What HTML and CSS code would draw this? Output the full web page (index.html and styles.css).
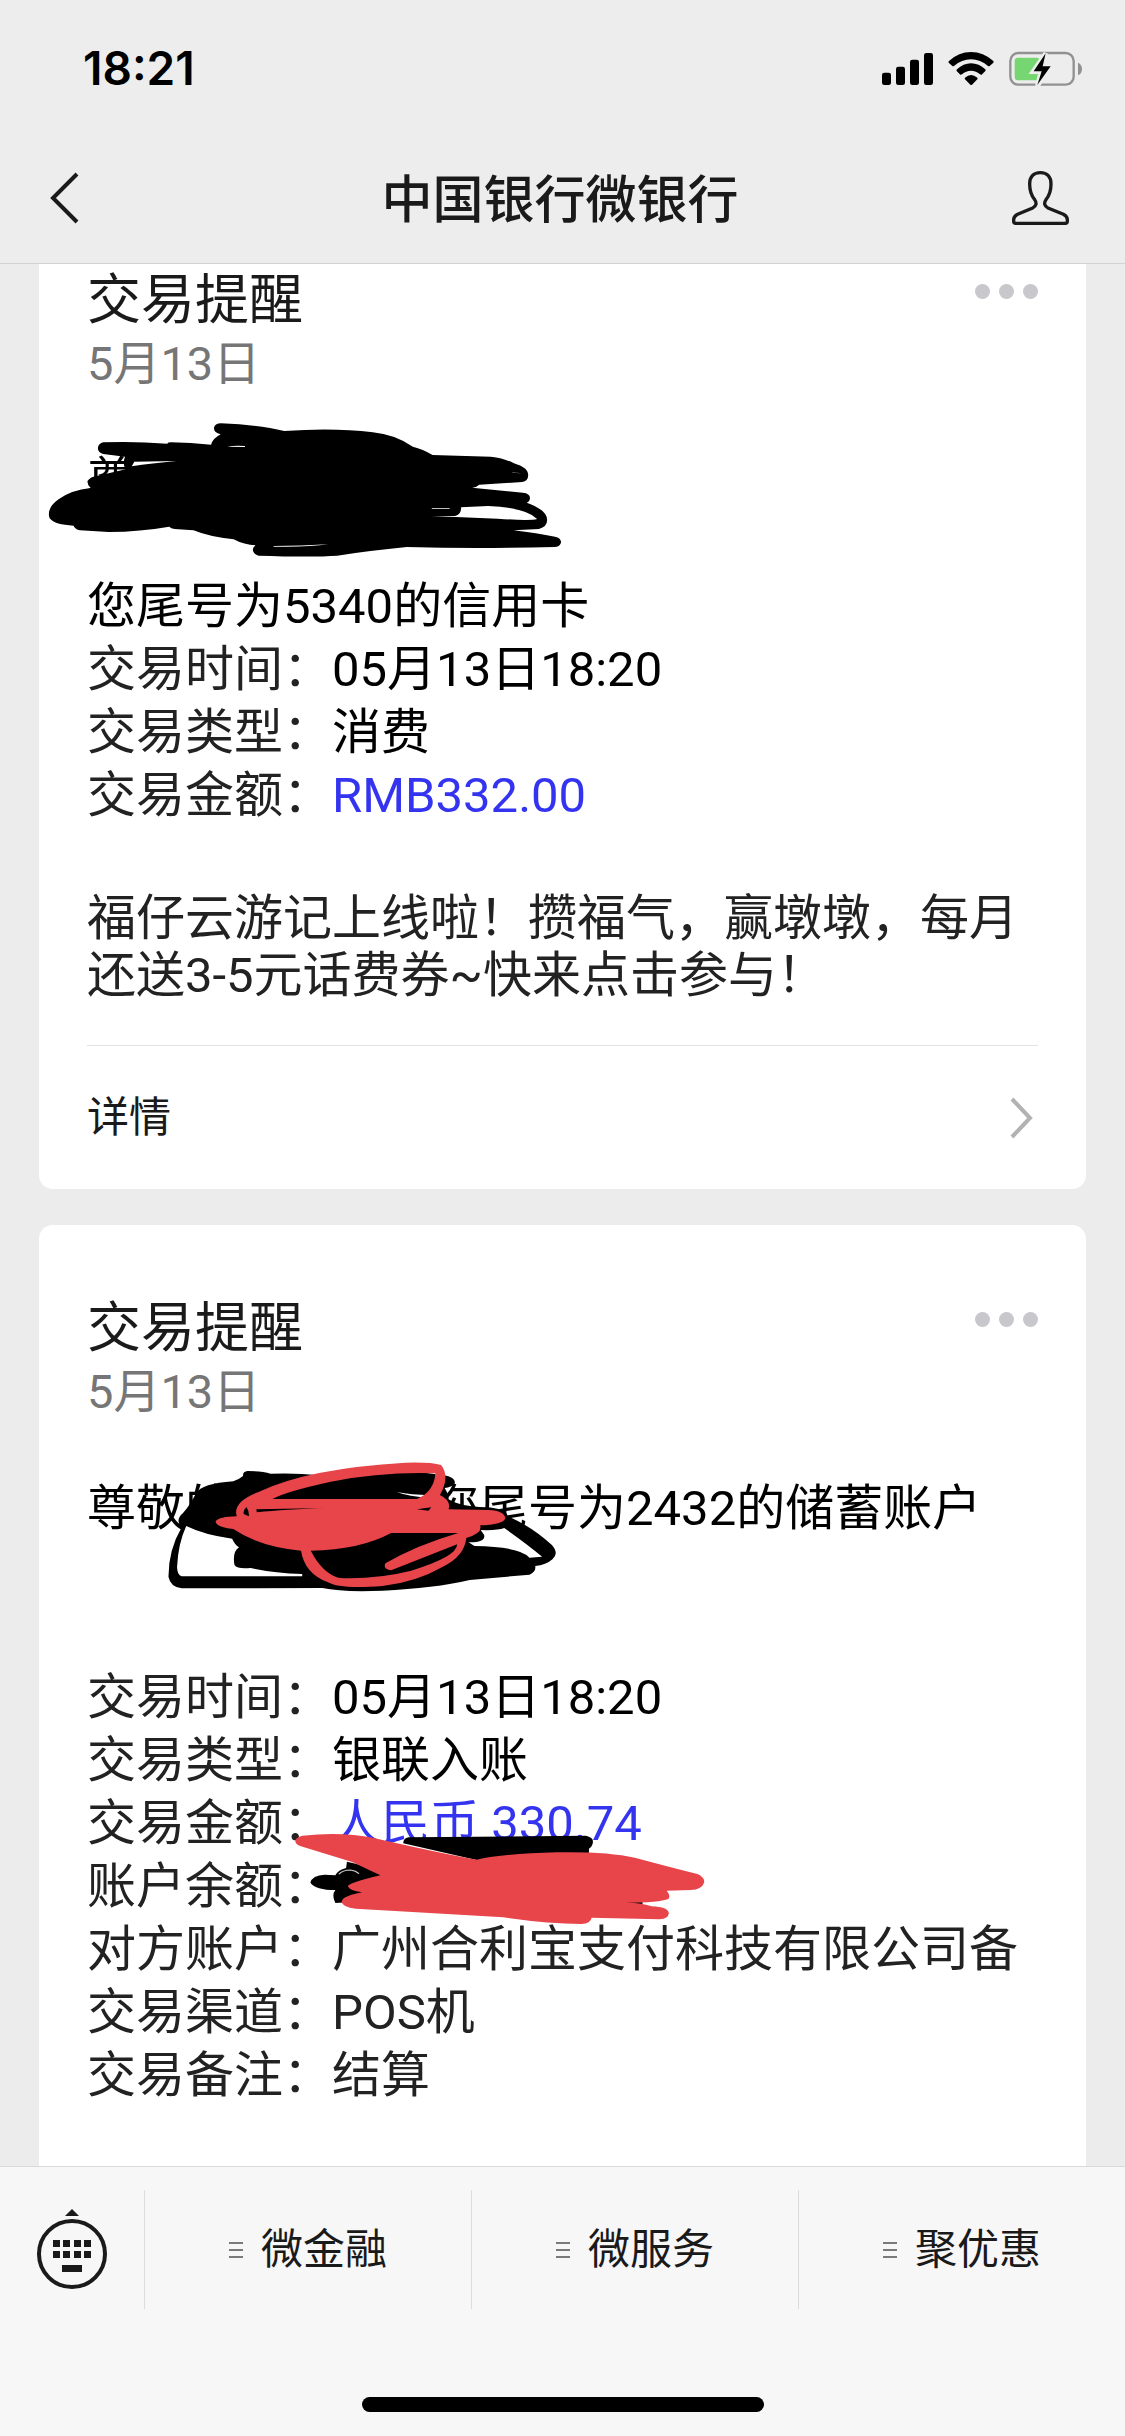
FILE: index.html
```html
<!DOCTYPE html>
<html lang="zh-CN">
<head>
<meta charset="utf-8">
<meta name="viewport" content="width=device-width, initial-scale=1">
<title>中国银行微银行</title>
<link rel="stylesheet" href="styles.css">
</head>
<body>
<header class="header">
  <div class="status">
    <span class="status__time">18:21</span>
    <svg class="status__icons" viewBox="63 63 606 108" aria-hidden="true">
      <rect x="66" y="128" width="27" height="37" rx="7"/>
      <rect x="108" y="110" width="27" height="55" rx="7"/>
      <rect x="150" y="89" width="27" height="76" rx="7"/>
      <rect x="192" y="69" width="27" height="96" rx="7"/>
      <path d="M267 93Q296 66 333 66Q370 66 400 93Q402 96 400 98L389 108Q387 110 384 108Q361 88 333 88Q305 88 282 108Q279 110 277 108L266 98Q264 96 267 93Z"/>
      <path d="M291 118Q310 100 333 100Q357 100 376 118Q378 121 376 123L365 134Q363 135 360 133Q348 122 333 122Q318 122 306 133Q303 135 301 134L290 123Q288 121 291 118Z"/>
      <path d="M315 143Q333 127 352 143Q354 146 352 148L336 164Q333 166 331 164L315 148Q313 146 315 143Z"/>
      <rect x="451" y="69" width="190" height="95" rx="24" fill="none" stroke="#919191" stroke-width="7"/>
      <rect x="464" y="83" width="76" height="68" rx="10" fill="#76d672"/>
      <path d="M654 98Q666 103 666 117Q666 131 654 136Z" fill="#919191"/>
      <path d="M557 70L519 125H543L532 168L573 108H549Z" stroke="#ededed" stroke-width="14"/>
      <path d="M557 70L521 124H545L532 165L572 109H548Z"/>
    </svg>
  </div>
  <nav class="nav">
    <button class="nav__button" type="button" aria-label="返回">
      <svg width="30" height="52" viewBox="0 0 30 52"><path d="M27 2L3 26L27 50" fill="none" stroke="#1a1a1a" stroke-width="4"/></svg>
    </button>
    <h1 class="nav__title">中国银行微银行</h1>
    <button class="nav__button nav__button--end" type="button" aria-label="公众号资料">
      <svg width="59" height="56" viewBox="455 420 177 168"><path d="M543 428C522 428 511 441 511 462C511 487 517 498 526 509C533 519 531 529 520 534L475 553Q463 559 463 569V574Q463 580 469 580H618Q624 580 624 574V569Q624 559 612 553L566 534C555 529 553 519 560 509C569 498 575 487 575 462C575 441 564 428 543 428Z" fill="none" stroke="#1a1a1a" stroke-width="10"/></svg>
    </button>
  </nav>
</header>

<main class="chat">
  <article class="card card--cut">
    <div class="card__head">
      <div>
        <h2 class="card__title">交易提醒</h2>
        <time class="card__date" datetime="05-13">5月13日</time>
      </div>
      <button class="more" type="button" aria-label="更多"><i></i><i></i><i></i></button>
    </div>
    <div class="card__body">
      <p class="strong redacted">尊敬的
        <svg class="scribble scribble--greeting" viewBox="0 0 1568 540" preserveAspectRatio="none" aria-hidden="true">
          <path d="M205 127Q290 123 384 131Q386 127 395 127Q450 128 507 134Q512 115 534 103Q515 98 515 85Q517 70 535 70Q640 74 712 93Q850 82 960 97Q1020 103 1072 140Q1100 147 1127 165L1290 170Q1330 175 1355 190Q1395 203 1395 225Q1395 243 1378 246L1258 254Q1250 262 1238 263L1380 278Q1400 280 1400 294Q1399 305 1391 308Q1448 330 1448 360Q1448 380 1425 387L1354 391Q1420 400 1470 410Q1487 414 1487 427Q1485 441 1468 441Q1250 447 1055 441Q950 452 860 467Q790 472 640 467Q624 462 624 448Q625 440 632 436Q600 435 570 418Q500 410 458 391L405 387Q394 386 390 380Q310 395 220 396L140 391Q125 387 122 377Q70 375 55 355Q45 325 80 298Q115 270 170 264Q160 255 161 243Q168 230 190 227L268 208Q258 193 266 170L205 162Q190 157 190 144Q192 130 205 127Z"/>
          <path fill="#fff" d="M1207 322L1283 318Q1390 323 1420 357Q1400 363 1310 356L1125 348H1190Q1208 345 1207 322ZM292 185L410 183Q340 190 285 199ZM1125 324H1175V326H1125ZM552 140Q570 136 602 138V141ZM682 438Q760 438 835 433Q780 442 682 440ZM1342 218Q1360 214 1376 222Q1360 217 1342 218Z"/>
        </svg>
      </p>
      <p class="strong line-gap">您尾号为5340的信用卡</p>
      <dl class="facts">
        <div><dt>交易时间：</dt><dd class="strong">05月13日18:20</dd></div>
        <div><dt>交易类型：</dt><dd class="strong">消费</dd></div>
        <div><dt>交易金额：</dt><dd class="amount">RMB332.00</dd></div>
      </dl>
      <p class="promo">福仔云游记上线啦！攒福气，赢墩墩，每月还送3-5元话费券~快来点击参与！</p>
    </div>
    <a class="card__link" href="#">详情
      <svg width="28" height="42" viewBox="0 0 28 42" aria-hidden="true"><path d="M2 2L20 21L2 40" fill="none" stroke="#b2b2b2" stroke-width="4"/></svg>
    </a>
  </article>

  <article class="card card--last">
    <div class="card__head">
      <div>
        <h2 class="card__title">交易提醒</h2>
        <time class="card__date" datetime="05-13">5月13日</time>
      </div>
      <button class="more" type="button" aria-label="更多"><i></i><i></i><i></i></button>
    </div>
    <div class="card__body">
      <p class="strong redacted">尊敬的<span class="hidden-name"></span>您尾号为2432的储蓄账户
        <svg class="scribble scribble--name" viewBox="0 0 1568 510" preserveAspectRatio="none" aria-hidden="true">
          <path d="M205 93Q230 93 245 101Q290 98 330 106Q430 75 540 104Q567 108 566 130Q560 143 548 144Q556 165 555 178Q575 200 620 202Q655 205 658 228Q700 260 735 315Q748 340 736 358Q725 375 706 378Q708 395 696 404L592 420Q530 445 440 452Q370 457 335 444L90 445Q70 440 67 410Q67 330 90 262Q78 240 92 220Q105 195 115 160Q125 130 180 124Q190 118 197 108Q196 95 205 93Z"/>
          <path fill="#fff" d="M98 258Q130 285 178 296Q182 313 190 322Q178 335 182 375Q187 388 210 384Q250 400 300 402V409H90Q82 405 82 380Q84 310 98 258ZM652 264Q690 310 718 350L696 353Q680 320 600 318L590 307Q620 308 617 285L611 270Q640 272 652 264ZM465 156Q490 164 523 166V173Q485 170 465 156Z"/>
          <path fill="#e8454b" d="M186 229Q178 185 225 155Q310 85 480 68Q525 66 542 75Q558 110 540 165Q560 182 555 208L625 210Q652 212 654 235Q650 255 610 256Q615 280 586 294Q582 350 545 380Q500 425 440 438Q365 448 345 427Q304 400 298 332Q225 320 180 267Q150 262 149 244Q155 230 186 229ZM248 177H500Q530 155 532 100Q440 95 350 125Q270 155 248 177ZM315 332Q335 400 365 414Q430 418 490 392Q570 350 570 313L455 391Q440 388 445 370Q500 315 572 279H455Q400 330 315 332Z" fill-rule="evenodd"/>
          <path d="M220 208L345 204Q270 208 221 217ZM500 208L525 202L520 212ZM198 222Q197 210 203 201Q208 215 207 229Z"/>
        </svg>
      </p>
      <dl class="facts facts--spaced">
        <div><dt>交易时间：</dt><dd class="strong">05月13日18:20</dd></div>
        <div><dt>交易类型：</dt><dd class="strong">银联入账</dd></div>
        <div><dt>交易金额：</dt><dd class="amount">人民币 330.74</dd></div>
        <div class="redacted"><dt>账户余额：</dt><dd>
          <svg class="scribble scribble--balance" viewBox="0 0 1568 900" preserveAspectRatio="none" aria-hidden="true">
            <path d="M848 592L1245 587Q1262 592 1261 606Q1260 620 1252 626V660H1000L836 610Q836 595 848 592ZM710 665L790 690V780L684 789Q675 765 684 750Q640 750 628 728Q632 706 660 704L684 706Q690 690 708 684ZM1330 780H1372V795H1330Z"/>
            <path d="M692 703Q700 690 718 690Q730 692 737 701" fill="none" stroke="#ccc" stroke-width="3"/>
            <path fill="#e8454b" d="M610 587Q700 575 770 594Q920 640 1000 659Q1070 640 1180 637Q1290 634 1355 653Q1430 680 1495 702Q1512 712 1510 728Q1505 748 1480 750L1426 752Q1436 765 1430 777Q1410 788 1335 788Q1375 789 1392 799Q1430 801 1431 820Q1430 837 1410 838L1258 833Q1256 850 1235 852Q1160 852 1060 832L905 820L730 806Q700 802 698 785Q700 768 744 757Q715 752 712 739Q714 728 785 706Q745 680 720 665L605 618Q590 610 596 597Q600 590 610 587Z"/>
          </svg>
        </dd></div>
        <div><dt>对方账户：</dt><dd>广州合利宝支付科技有限公司备</dd></div>
        <div><dt>交易渠道：</dt><dd>POS机</dd></div>
        <div><dt>交易备注：</dt><dd>结算</dd></div>
      </dl>
    </div>
  </article>
</main>

<footer class="footer">
  <div class="menu">
    <button class="menu__keyboard" type="button" aria-label="切换键盘">
      <svg width="72" height="84" viewBox="0 0 72 84" fill="#1a1a1a">
        <path d="M36 1L43 8H29Z"/>
        <circle cx="36" cy="46" r="33" fill="none" stroke="#1a1a1a" stroke-width="4"/>
        <path d="M17 32h7v7h-7zM27 32h7v7h-7zM38 32h7v7h-7zM48 32h7v7h-7zM17 43h7v7h-7zM27 43h7v7h-7zM38 43h7v7h-7zM48 43h7v7h-7zM26 57h20v7H26z"/>
      </svg>
    </button>
    <button class="menu__item" type="button"><svg width="14" height="18" viewBox="0 0 14 18" aria-hidden="true"><path d="M0 2H14M0 9H14M0 16H14" stroke="#7a7a7a" stroke-width="2"/></svg>微金融</button>
    <button class="menu__item" type="button"><svg width="14" height="18" viewBox="0 0 14 18" aria-hidden="true"><path d="M0 2H14M0 9H14M0 16H14" stroke="#7a7a7a" stroke-width="2"/></svg>微服务</button>
    <button class="menu__item" type="button"><svg width="14" height="18" viewBox="0 0 14 18" aria-hidden="true"><path d="M0 2H14M0 9H14M0 16H14" stroke="#7a7a7a" stroke-width="2"/></svg>聚优惠</button>
  </div>
  <div class="home-bar"></div>
</footer>
</body>
</html>
```
FILE: styles.css
```css
* {
  box-sizing: border-box;
  margin: 0;
  padding: 0;
}

body {
  display: flex;
  flex-direction: column;
  height: 100vh;
  overflow: hidden;
  background: #ececec;
  color: #222;
  font-family: Roboto, "Noto Sans CJK SC", sans-serif;
  font-size: 49px;
  line-height: 63px;
}

button {
  border: 0;
  background: none;
  color: inherit;
  font: inherit;
}

svg {
  display: block;
}

/* Header */

.header {
  background: #ededed;
  border-bottom: 1px solid #d2d2d2;
}

.status {
  display: flex;
  align-items: center;
  justify-content: space-between;
  height: 137px;
  padding: 0 42px 0 83px;
}

.status__time {
  color: #000;
  font-family: Inter, sans-serif;
  font-size: 46px;
  font-weight: 600;
}

.status__icons {
  width: 202px;
  height: 36px;
}

.nav {
  display: grid;
  grid-template-columns: 1fr auto 1fr;
  align-items: center;
  height: 126px;
  padding: 0 55px 0 50px;
}

.nav__button {
  justify-self: start;
  padding-bottom: 4px;
}

.nav__button--end {
  justify-self: end;
}

.nav__title {
  color: #1a1a1a;
  font-size: 51px;
  font-weight: 500;
}

/* Message list */

.chat {
  display: flex;
  flex: 1 1 0;
  flex-direction: column;
  gap: 36px;
  min-height: 0;
  padding: 0 39px;
  overflow: hidden;
}

.card {
  flex: none;
  padding: 72px 48px 0;
  border-radius: 14px;
  background: #fff;
}

/* The oldest card is scrolled partly under the header */
.card--cut {
  padding-top: 5px;
  border-top-left-radius: 0;
  border-top-right-radius: 0;
}

/* The newest card runs on below the bottom menu */
.card--last {
  padding-bottom: 144px;
}

.card__head {
  display: flex;
  align-items: flex-start;
  justify-content: space-between;
}

.card__title {
  color: #1a1a1a;
  font-size: 54px;
  font-weight: 400;
}

.card__date {
  display: block;
  color: #767676;
  font-size: 47px;
}

.more {
  display: flex;
  gap: 9px;
  padding: 15px 0;
}

.more i {
  width: 15px;
  height: 15px;
  border-radius: 50%;
  background: #c7c7cc;
}

.card__body {
  padding: 54px 0 41px;
}

.strong {
  color: #000;
}

.line-gap {
  margin-top: 63px;
}

.facts > div {
  display: flex;
}

.facts--spaced {
  margin-top: 126px;
}

.amount {
  color: #3434f0;
}

.promo {
  margin-top: 63px;
  line-height: 57px;
}

.card__link {
  display: flex;
  align-items: center;
  justify-content: space-between;
  height: 144px;
  border-top: 1px solid #e2e2e2;
  color: #1a1a1a;
  font-size: 42px;
  text-decoration: none;
}

/* Hand-drawn marks over private details */

.redacted {
  position: relative;
}

.hidden-name {
  display: inline-block;
  width: 4em;
}

.scribble {
  position: absolute;
}

.scribble--greeting {
  top: -49px;
  left: -57px;
  width: 560px;
  height: 180px;
}

.scribble--name {
  top: -37px;
  left: 43px;
  width: 900px;
  height: 170px;
}

.scribble--balance {
  top: -215px;
  left: -57px;
  width: 700px;
  height: 300px;
}

/* Bottom menu */

.footer {
  padding: 23px 0 24px;
  border-top: 1px solid #d9d9d9;
  background: #f7f7f7;
}

.menu {
  display: flex;
  height: 119px;
}

.menu__keyboard {
  display: grid;
  place-items: center;
  width: 144px;
}

.menu__item {
  display: flex;
  flex: 1;
  align-items: center;
  justify-content: center;
  gap: 18px;
  border-left: 1px solid #dcdcdc;
  color: #1a1a1a;
  font-size: 42px;
}

.home-bar {
  width: 402px;
  height: 15px;
  margin: 88px auto 0;
  border-radius: 8px;
  background: #000;
}
```
